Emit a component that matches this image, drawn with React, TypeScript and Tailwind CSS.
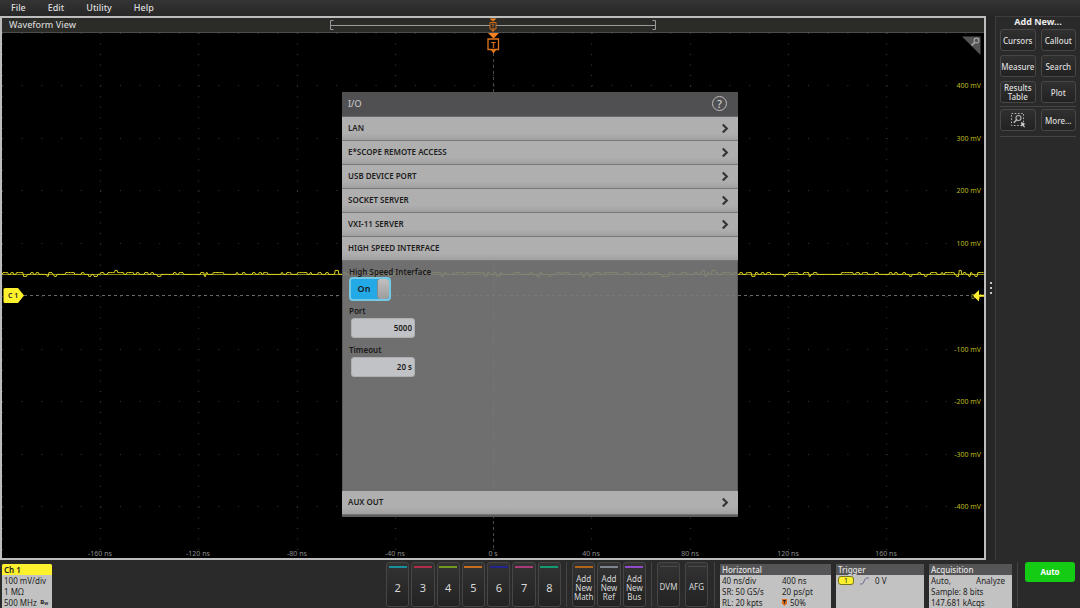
import { useState } from "react";

const MENU = ["File", "Edit", "Utility", "Help"];

const SECTIONS = [
    "LAN",
    "E*SCOPE REMOTE ACCESS",
    "USB DEVICE PORT",
    "SOCKET SERVER",
    "VXI-11 SERVER",
];

const CHANNELS = [
    { name: "2", bar: "bg-[#1a8f9c]" },
    { name: "3", bar: "bg-[#b02c49]" },
    { name: "4", bar: "bg-[#709a22]" },
    { name: "5", bar: "bg-[#c46f20]" },
    { name: "6", bar: "bg-[#24248e]" },
    { name: "7", bar: "bg-[#ab3b79]" },
    { name: "8", bar: "bg-[#149a70]" },
];

const ADD_BUTTONS = [
    { name: "Math", bar: "bg-[#b0641c]" },
    { name: "Ref", bar: "bg-[#80868f]" },
    { name: "Bus", bar: "bg-[#924ac8]" },
];

const TIME_LABELS = [
    { x: 100, text: "-160 ns" },
    { x: 198, text: "-120 ns" },
    { x: 297, text: "-80 ns" },
    { x: 395, text: "-40 ns" },
    { x: 493, text: "0 s" },
    { x: 591, text: "40 ns" },
    { x: 690, text: "80 ns" },
    { x: 788, text: "120 ns" },
    { x: 886, text: "160 ns" },
];

const VOLT_LABELS = [
    { y: 85, text: "400 mV" },
    { y: 138, text: "300 mV" },
    { y: 190, text: "200 mV" },
    { y: 243, text: "100 mV" },
    { y: 296, text: "0 V" },
    { y: 349, text: "-100 mV" },
    { y: 401, text: "-200 mV" },
    { y: 454, text: "-300 mV" },
    { y: 506, text: "-400 mV" },
];

// noisy flat line, same every time it renders
function buildTrace() {
    let seed = 11;
    const next = () => {
        seed = (seed * 1103515245 + 12345) % 2147483648;
        return seed / 2147483648;
    };
    let d = "M2 274.4";
    let x = 3;
    while (x < 982) {
        const r = next();
        const w = 1 + Math.round(next() * 2);
        let y = 274.4;
        if (r > 0.99) y = 270.4;
        else if (r > 0.56) y = 272.6;
        else if (r < 0.05) y = 276.4;
        d += ` L${x} ${y} h${w}`;
        x += w + 0.7;
    }
    return d;
}

const TRACE = buildTrace();

function Graticule() {
    return (
        <svg viewBox="2 33 982 525" className="block min-h-0 w-full flex-1 bg-black" role="img" aria-label="Channel 1 waveform">
            <g stroke="#363636" strokeWidth="1.2">
                {TIME_LABELS.map((t) => (
                    <line key={t.x} x1={t.x + 0.5} x2={t.x + 0.5} y1="33" y2="558" strokeDasharray="1 9.53" />
                ))}
                {VOLT_LABELS.map((v) => (
                    <line key={v.y} x1="2" x2="950" y1={v.y + 0.5} y2={v.y + 0.5} strokeDasharray="1 18.66" />
                ))}
                <line x1="2" x2="984" y1="33.5" y2="33.5" strokeDasharray="1 18.66" />
                <line x1="2.5" x2="2.5" y1="33" y2="558" strokeDasharray="1 9.53" />
            </g>
            <line x1="493.5" x2="493.5" y1="53" y2="548" stroke="#4c4c4c" strokeDasharray="3 3" />
            <line x1="24" x2="972" y1="295.5" y2="295.5" stroke="#6a6a6a" strokeDasharray="3 3" />
            <path d="M2 274.5 H984" stroke="#8f8a14" />
            <path d={TRACE} fill="none" stroke="#e0d824" />

            <g fontFamily="'Noto Sans', sans-serif" fontSize="7">
                {TIME_LABELS.map((t) => (
                    <text key={t.x} x={t.x} y="555.5" textAnchor="middle" fill="#8d8d8d">{t.text}</text>
                ))}
                {VOLT_LABELS.map((v) => (
                    <text key={v.y} x="981" y={v.y + 3} textAnchor="end" fill="#bdb91f">{v.text}</text>
                ))}
            </g>

            {/* channel and trigger level handles */}
            <path d="M5 288 H18 L24 295.5 L18 303 H5 Q3.5 303 3.5 301.5 V289.5 Q3.5 288 5 288 Z" fill="#fdf02c" />
            <text x="8" y="298" fontFamily="'Noto Sans', sans-serif" fontSize="7" fontWeight="600" fill="#222">C 1</text>
            <path d="M973 295.7 L979 290 V294.8 H984 V296.8 H979 V301.5 Z" fill="#fdf02c" />

            {/* trigger position */}
            <path d="M488 33 H499 L493.5 38.5 Z" fill="#f5821f" />
            <path d="M488 39 H498.5 V49.5 H488 Z" fill="none" stroke="#e0741a" strokeWidth="1.3" />
            <path d="M490.5 49.5 H496.5 L493.5 53.5 Z" fill="#e0741a" />
            <text x="493.3" y="47.5" textAnchor="middle" fontFamily="'Noto Sans', sans-serif" fontSize="8" fontWeight="600" fill="#e0741a">T</text>

            {/* zoom corner */}
            <path d="M962 36.5 H980.5 V55 Z" fill="#545454" />
            <circle cx="976.5" cy="40.5" r="2.4" fill="none" stroke="#a3a3a3" strokeWidth="1.1" />
            <path d="M974.7 42.3 L971.5 45.5" stroke="#a3a3a3" strokeWidth="1.7" />
        </svg>
    );
}

function RecordBar() {
    return (
        <svg viewBox="0 0 328 14" className="block h-[14px] w-[328px]" aria-hidden="true">
            <path d="M4.5 2.5 H1.5 V11.5 H4.5 M323.5 2.5 H326.5 V11.5 H323.5" fill="none" stroke="#9a9a9a" />
            <path d="M1.5 7.5 H326.5" stroke="#9a9a9a" />
            <path d="M160.5 0.5 H167.5 L164 3.5 Z" fill="#f5821f" />
            <path d="M161 4.5 H167 V11 H161 Z" fill="#2b2b28" stroke="#cf6c1a" />
            <path d="M162.6 6.2 H165.4 M164 6.2 V9.5" stroke="#cf6c1a" strokeWidth="0.9" />
            <path d="M162 11.5 H166 L164 14 Z" fill="#e0741a" />
        </svg>
    );
}

function Chevron() {
    return (
        <svg viewBox="0 0 8 10" className="h-[10px] w-2" fill="none" stroke="#353535" strokeWidth="2.2" aria-hidden="true">
            <path d="M1.8 1.5 L5.8 5.5 L1.8 9.5" />
        </svg>
    );
}

function SectionRow({ title, arrow = true }: { title: string; arrow?: boolean }) {
    return (
        <button className="flex h-6 w-full items-center justify-between border-b border-[#777] bg-linear-to-b from-[#afafaf] from-70% to-[#a0a0a0] pr-[9px] pl-[6px] text-[8px] font-semibold text-[#1d1d1d]">
            {title}
            {arrow && <Chevron />}
        </button>
    );
}

function IoDialog() {
    const [on, setOn] = useState(true);

    return (
        <section aria-label="I/O" className="pointer-events-auto w-[396px] border-b-2 border-[#5c5c5e] bg-[#7b7b7b]/90">
            <header className="flex h-[25px] items-center justify-between border-b border-[#69696b] bg-[#505052] pr-[11px] pl-[6px]">
                <h2 className="text-[9px] text-[#d2d2d2]">I/O</h2>
                <button aria-label="Help" className="flex h-[15px] w-[15px] items-center justify-center rounded-full border border-[#bdbdbd] text-[11px] leading-none font-medium text-[#cfcfcf]">
                    ?
                </button>
            </header>
            {SECTIONS.map((title) => (
                <SectionRow key={title} title={title} />
            ))}
            <SectionRow title="HIGH SPEED INTERFACE" arrow={false} />

            <div className="flex min-h-[230px] flex-col items-start border-x border-[#5c5c5e] px-[6px] pt-[5px] text-[8px] font-semibold text-[#1a1a1a]">
                <label htmlFor="hsi" className="leading-[11px]">High Speed Interface</label>
                <button
                    id="hsi"
                    role="switch"
                    aria-checked={on}
                    onClick={() => setOn(!on)}
                    className="flex h-6 w-[42px] items-stretch rounded-[4px] border-2 border-[#74c9e4] bg-[#22a9e6]"
                >
                    <span className="flex flex-1 items-center justify-center text-[9px]">{on ? "On" : "Off"}</span>
                    <span className="w-3 rounded-[3px] border-l border-[#7c8b92] bg-linear-to-b from-[#c0c0c0] to-[#9d9d9d]" />
                </button>
                <label htmlFor="port" className="mt-1 leading-[11px]">Port</label>
                <input
                    id="port"
                    defaultValue="5000"
                    className="mt-[2px] ml-[2px] h-5 w-16 rounded-[3px] border border-[#aeafb1] bg-[#c1c2c5] pr-[2px] text-right"
                />
                <label htmlFor="timeout" className="mt-[6px] leading-[11px]">Timeout</label>
                <input
                    id="timeout"
                    defaultValue="20 s"
                    className="mt-[2px] ml-[2px] h-5 w-16 rounded-[3px] border border-[#aeafb1] bg-[#c1c2c5] pr-[2px] text-right"
                />
            </div>

            <SectionRow title="AUX OUT" />
        </section>
    );
}

const sideButton =
    "flex h-[22px] items-center justify-center rounded-[3px] border border-[#494745] bg-linear-to-b from-[#303030] to-[#222] text-center text-[8px] leading-[9px] font-medium whitespace-nowrap text-[#dedede]";

function Sidebar() {
    return (
        <aside className="w-[85px] shrink-0 border-t border-l border-[#3d3d3d] bg-[#2a2a2a] px-1">
            <h2 className="h-3 text-center text-[9px] leading-[10px] font-bold text-[#ececec]">Add New...</h2>
            <div className="grid grid-cols-2 gap-x-[5px] gap-y-1 border-b border-[#444] pb-[3px]">
                <button className={sideButton}>Cursors</button>
                <button className={sideButton}>Callout</button>
                <button className={sideButton}>Measure</button>
                <button className={sideButton}>Search</button>
                <button className={sideButton}>Results<br />Table</button>
                <button className={sideButton}>Plot</button>
            </div>
            <div className="grid grid-cols-2 gap-x-[5px] border-b border-[#444] pt-[2px] pb-[5px]">
                <button className={sideButton} aria-label="Draw a box">
                    <svg viewBox="0 0 16 16" className="h-4 w-4" fill="none" stroke="#b5b5b5" aria-hidden="true">
                        <rect x="1.5" y="1.5" width="12" height="12" strokeDasharray="1.6 1.6" />
                        <circle cx="8.5" cy="6" r="2.5" strokeWidth="1.1" />
                        <path d="M6.7 7.8 L3.8 10.8" strokeWidth="1.6" />
                        <path d="M11 10 L15.5 12 L13.7 12.8 L15 15 L14 15.5 L12.8 13.5 L11.5 14.8 Z" fill="#d0d0d0" stroke="none" />
                    </svg>
                </button>
                <button className={sideButton}>More...</button>
            </div>
        </aside>
    );
}

const footButton =
    "flex h-[45px] flex-col items-center rounded-[3px] border border-[#484644] bg-linear-to-b from-[#333] to-[#232323] pt-[3px] text-[#d8d8d8]";

function Divider() {
    return <span className="mx-[5px] h-[45px] w-px bg-[#444]" />;
}

function Footer() {
    return (
        <footer className="flex h-12 shrink-0 items-start bg-[#2a2a2a] pt-[2px] pr-[5px] pl-[2px]">
            <button className="mt-[2px] mr-auto h-11 w-[50px] overflow-hidden rounded-t-[2px] bg-[#c2c2c2] text-left text-[8px] leading-[11px] text-[#222]">
                <span className="block bg-[#fdf02c] pl-[2px] font-semibold">Ch 1</span>
                <span className="block pl-[2px]">100 mV/div</span>
                <span className="block pl-[2px]">1 MΩ</span>
                <span className="flex items-center justify-between pr-1 pl-[2px]">
                    500 MHz
                    <span className="flex items-start text-[6px] leading-[6px] font-bold">
                        B<span className="pt-[2px] text-[4px]">W</span>
                    </span>
                </span>
            </button>

            <div className="grid w-[175px] grid-cols-7 gap-[2px]">
                {CHANNELS.map((c) => (
                    <button key={c.name} className={footButton}>
                        <span className={`h-[2px] w-[18px] ${c.bar}`} />
                        <span className="flex flex-1 items-center text-[11px] leading-none">{c.name}</span>
                    </button>
                ))}
            </div>
            <Divider />
            <div className="grid w-[74px] grid-cols-3 gap-[2px]">
                {ADD_BUTTONS.map((b) => (
                    <button key={b.name} className={footButton}>
                        <span className={`h-[2px] w-[18px] ${b.bar}`} />
                        <span className="flex flex-1 items-center text-[8px] leading-[9px]">Add<br />New<br />{b.name}</span>
                    </button>
                ))}
            </div>
            <Divider />
            <div className="mr-px grid w-[51px] grid-cols-2 gap-[5px]">
                {["DVM", "AFG"].map((name) => (
                    <button key={name} className={footButton}>
                        <span className="h-px w-[18px] bg-[#4a4a4a]" />
                        <span className="flex flex-1 items-center text-[8px] leading-none">{name}</span>
                    </button>
                ))}
            </div>
            <Divider />

            <div className="mt-[2px] flex gap-[5px] text-[8px] leading-[11px] text-[#222]">
                <button className="h-11 w-[111px] bg-[#c2c2c2] text-left">
                    <span className="block bg-[#555557] pl-[2px] font-medium text-[#e4e4e4]">Horizontal</span>
                    <span className="grid grid-cols-[60px_1fr] pl-[2px]">
                        <span>40 ns/div</span>
                        <span>400 ns</span>
                        <span>SR: 50 GS/s</span>
                        <span>20 ps/pt</span>
                        <span>RL: 20 kpts</span>
                        <span className="flex items-center gap-[3px]">
                            <svg viewBox="0 0 5 7" className="h-[7px] w-[5px]" aria-hidden="true">
                                <path d="M0 0 H5 V4.5 L2.5 7 L0 4.5 Z" fill="#d86a1a" />
                                <path d="M1 1.5 H4 M2.5 1.5 V4.5" stroke="#222" />
                            </svg>
                            50%
                        </span>
                    </span>
                </button>
                <button className="flex h-11 w-[88px] flex-col bg-[#c2c2c2] text-left">
                    <span className="block w-full bg-[#555557] pl-[2px] font-medium text-[#e4e4e4]">Trigger</span>
                    <span className="flex items-center gap-[6px] pl-[2px]">
                        <span className="flex h-[9px] w-4 items-center justify-center rounded-[3px] border border-[#77751f] bg-[#fdf02c] text-[7px] leading-none">1</span>
                        <svg viewBox="0 0 9 8" className="h-2 w-[9px]" fill="none" stroke="#6b6b96" aria-hidden="true">
                            <path d="M0 7 H2 C4 7 4 1 7 1 H9" />
                        </svg>
                        0 V
                    </span>
                </button>
                <button className="h-11 w-[83px] bg-[#c2c2c2] text-left">
                    <span className="block bg-[#555557] pl-[2px] font-medium text-[#e4e4e4]">Acquisition</span>
                    <span className="flex justify-between pr-[7px] pl-[2px]"><span>Auto,</span><span>Analyze</span></span>
                    <span className="block pl-[2px]">Sample: 8 bits</span>
                    <span className="block pl-[2px]">147.681 kAcqs</span>
                </button>
            </div>
            <Divider />
            <button className="ml-[2px] h-5 w-[50px] rounded-[3px] bg-[#14cc14] text-[8px] font-bold text-white">Auto</button>
        </footer>
    );
}

export default function App() {
    return (
        <div className="relative flex h-screen flex-col overflow-hidden bg-[#262626] font-['Noto_Sans',sans-serif]">
            <nav className="flex h-4 shrink-0 items-center gap-[22px] bg-linear-to-b from-[#343434] to-[#272727] pl-[11px] text-[9px] font-medium text-[#dcdcdc]">
                {MENU.map((item) => (
                    <button key={item}>{item}</button>
                ))}
            </nav>

            <div className="flex min-h-0 flex-1">
                <main className="flex min-w-0 flex-1 flex-col border-2 border-[#bdbdbd]">
                    <div className="grid h-[15px] shrink-0 grid-cols-[1fr_auto_1fr] items-center border-b border-[#4c4c4c] bg-[#2b2b28]">
                        <h1 className="pl-[7px] text-[9px] leading-[14px] font-medium text-[#d4d4d4]">Waveform View</h1>
                        <RecordBar />
                    </div>
                    <Graticule />
                </main>
                <div className="flex w-[9px] shrink-0 flex-col items-center justify-center gap-[3px]">
                    <span className="h-[2px] w-[2px] bg-[#c4c4c4]" />
                    <span className="h-[2px] w-[2px] bg-[#c4c4c4]" />
                    <span className="h-[2px] w-[2px] bg-[#c4c4c4]" />
                </div>
                <Sidebar />
            </div>

            <Footer />

            <div className="pointer-events-none absolute inset-0 flex items-center justify-center">
                <IoDialog />
            </div>
        </div>
    );
}
